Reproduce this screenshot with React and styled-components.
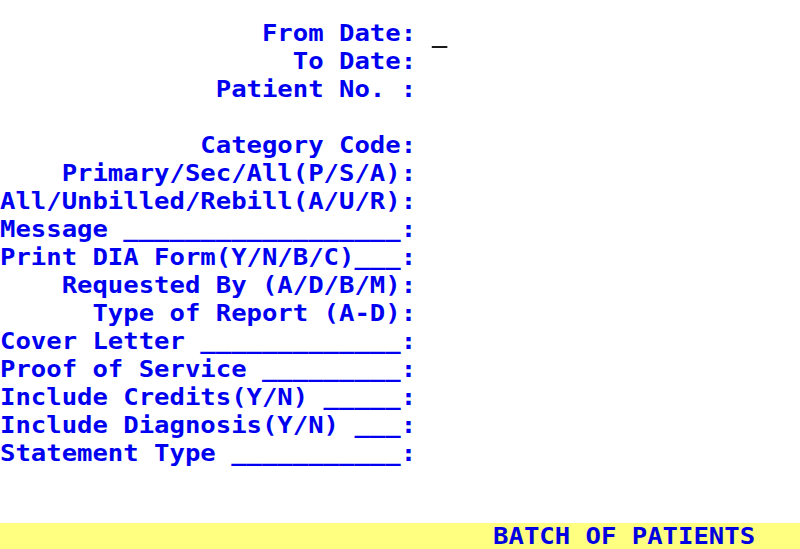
import React from "react";
import styled, { createGlobalStyle } from "styled-components";

const Global = createGlobalStyle`
  html, body {
    margin: 0;
    padding: 0;
    background: #ffffff;
    overflow: hidden;
  }
  body {
    width: 800px;
    height: 549px;
  }
`;

const Screen = styled.div`
  width: 800px;
  height: 549px;
  overflow: hidden;
  padding-top: 19px;
  box-sizing: border-box;
  display: flex;
  flex-direction: column;
  font-family: "DejaVu Sans Mono", "Liberation Mono", monospace;
  font-weight: bold;
  font-size: 23px;
  color: #0000f0;
  background: #ffffff;
`;

const Row = styled.div`
  height: ${(p) => p.$h || 28}px;
  line-height: ${(p) => p.$h || 28}px;
  white-space: pre;
  transform: scaleX(1.1128);
  transform-origin: 0 50%;
  color: ${(p) => p.$color || "inherit"};
`;

const StatusBar = styled.div`
  height: 26px;
  flex-shrink: 0;
  background: #ffff80;
  margin-top: auto;
`;

const Cursor = styled.span`
  display: inline-block;
  width: 1ch;
  height: 2px;
  background: #1a1a1a;
  vertical-align: -7px;
`;

const lines = [
  "                   To Date:",
  "              Patient No. :",
  "",
  "             Category Code:",
  "    Primary/Sec/All(P/S/A):",
  "All/Unbilled/Rebill(A/U/R):",
  "Message __________________:",
  "Print DIA Form(Y/N/B/C)___:",
  "    Requested By (A/D/B/M):",
  "      Type of Report (A-D):",
  "Cover Letter _____________:",
  "Proof of Service _________:",
  "Include Credits(Y/N) _____:",
  "Include Diagnosis(Y/N) ___:",
  "Statement Type ___________:",
];

export default function App() {
  return (
    <>
      <Global />
      <Screen>
        <Row>
          {"                 From Date: "}
          <Cursor />
        </Row>
        {lines.map((l, i) => (
          <Row key={i}>{l}</Row>
        ))}
        <StatusBar>
          <Row $h={26} $color="#0000e0">
            {"                                BATCH OF PATIENTS"}
          </Row>
        </StatusBar>
      </Screen>
    </>
  );
}
